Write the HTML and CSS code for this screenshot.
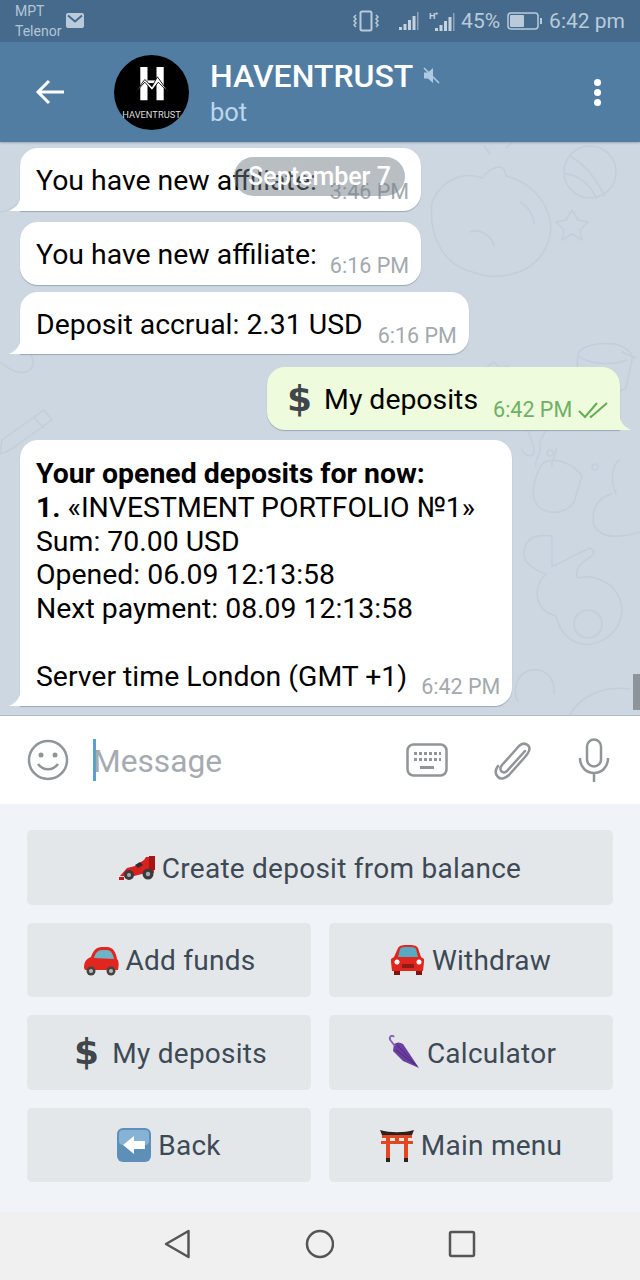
FILE: index.html
```html
<!DOCTYPE html>
<html lang="en">
<head>
<meta charset="utf-8">
<title>HAVENTRUST</title>
<link rel="stylesheet" href="styles.css">
</head>
<body>
<div class="app">
  <div class="status">
    <div class="carrier"><span>MPT</span><span>Telenor</span></div>
    <svg class="mail" viewBox="0 0 18 15"><rect width="18" height="15" rx="2" fill="#b9cbdb"/><path d="M2 2.500l7 6 7-6" fill="none" stroke="#456a8b" stroke-width="2"/></svg>
    <div class="status-right">
      <svg class="st-vib" width="26" height="22" viewBox="0 0 26 22"><rect x="7.500" y="1.500" width="11" height="19" rx="1.500" fill="none" stroke="#b9cbdb" stroke-width="2"/><path d="M3 5l-2 2 2 2-2 2 2 2-2 2 2 2M23 5l2 2-2 2 2 2-2 2 2 2-2 2" fill="none" stroke="#b9cbdb" stroke-width="1.500"/></svg>
      <svg class="st-sig" width="20" height="20" viewBox="0 0 20 20"><path d="M0 16h3v3H0zM4.500 13h3v6h-3zM9 9h3v10H9zM13.500 5h3v14h-3z" fill="#c3d3e0"/><path d="M18 1h1.500v18H18z" fill="#8aa3b8"/></svg>
      <svg class="st-sig2" width="26" height="22" viewBox="0 0 26 22"><text x="0" y="9" class="st-h">H⁺</text><path d="M6 18h3v3H6zM10.500 15h3v6h-3zM15 11h3v10h-3zM19.500 7h3v14h-3z" fill="#c3d3e0"/><path d="M24 3h1.500v18H24z" fill="#8aa3b8"/></svg>
      <span class="st-pct">45%</span>
      <svg class="st-bat" width="36" height="18" viewBox="0 0 36 18"><rect x="1" y="1" width="30" height="16" rx="3" fill="none" stroke="#b9cbdb" stroke-width="1.500"/><rect x="3" y="3" width="14" height="12" rx="1" fill="#b9cbdb"/><rect x="33" y="6" width="2" height="6" fill="#b9cbdb"/></svg>
      <span class="st-time">6:42 pm</span>
    </div>
  </div>

  <header class="bar">
    <svg class="back" width="30" height="26" viewBox="0 0 30 26"><path d="M29 13H3M14 2L3 13l11 11" fill="none" stroke="#fff" stroke-width="3"/></svg>
    <div class="avatar">
      <svg width="36" height="36" viewBox="0 0 40 40"><path d="M7 1h8v37H7zM25 1h8v37h-8z" fill="#fff"/><path d="M15 16h10v3H15z" fill="#fff"/><path d="M1 30L12 15l8 8 6-11 13 18-12-12-7 9-8-9z" fill="#fff" stroke="#000" stroke-width="1"/></svg>
      <span class="avatar-name">HAVENTRUST</span>
    </div>
    <div class="titles">
      <div class="title-row">
        <span class="title">HAVENTRUST</span>
        <svg width="17" height="17" viewBox="0 0 17 17"><path d="M1 5.500h4L10 1v15l-5-4.500H1z" fill="#aecbe4"/><path d="M1 1l15 15" stroke="#aecbe4" stroke-width="1.600" fill="none"/></svg>
      </div>
      <div class="sub">bot</div>
    </div>
    <div class="dots"><i></i><i></i><i></i></div>
  </header>

  <main class="chat">
    <svg class="wall" viewBox="0 0 640 573" fill="none" stroke="#bfcbd7" stroke-width="1.500" stroke-linecap="round" stroke-linejoin="round">
      <circle cx="590" cy="30" r="26"/><path d="M570 14c14 8 28 24 34 40M564 32c14 0 26 10 32 24"/>
      <path d="M432 60c12-26 34-30 50-24 8-10 22-18 24-2 24 6 40 24 44 44 4 24-12 48-38 54-20 6-34 0-46-4-22-8-38-34-34-68z"/><path d="M470 90c10-4 22 4 24 14M520 60c8 4 14 14 14 22M490 12l-6-8M506 6l6-6"/>
      <path d="M566 78l6-10 6 10 10 2-8 8 2 10-10-6-10 6 2-10-8-8z"/>
      <path d="M578 214c0-10 20-14 36-12 10 2 20 8 18 16l-6 28-32 18c-14-4-20-18-16-50z"/><path d="M578 214c10 8 34 10 48 4M622 210l14 6"/>
      <path d="M486 226l8-6 6 6 8-2 0 10 6 6-8 6-2 8-10-4-8 2 2-10-6-8z"/>
      <path d="M510 246c4 14 20 44 24 60 2 10-8 10-12 2M552 232c6 16 2 38-2 54"/>
      <path d="M2 298l42-30 8 10-42 30-10 4z"/><path d="M34 276l10 10"/>
      <path d="M78 344c10-12 26-40 34-46M68 308c16-4 40 12 50 22 4 4-2 8-6 6-16-4-30-12-44-28z"/>
      <path d="M0 220c10 8 22 14 30 8 6-6 2-18-6-24M0 70c8 0 20-8 24-18"/>
      <path d="M552 394c-14-2-26 0-28 16-2 10 10 18 22 22-14 14-12 36 10 42 8 30 32 34 50 22 14-8 22-30 10-46-8-12-26-18-38-14-6-10 8-18 14-22 4-4 0-10-6-6-16 6-24 14-34 16z"/>
      <circle cx="588" cy="482" r="14"/>
      <path d="M542 322c-8 14-14 34-2 44 12 8 28 4 34-6l8-26c-10-14-30-20-40-12z"/>
      <path d="M536 324c-2-6 6-14 4-20-2-6 4-10 6-16M552 324c-2-6 6-12 4-18"/>
      <path d="M612 352c-12 2-22 14-18 32 6 10 20 14 46 6M620 318c-8 4-10 20-4 34"/>
      <circle cx="595" cy="325" r="3"/><circle cx="550" cy="311" r="3"/>
      <path d="M570 573c8-16 30-30 60-26"/>
      <path d="M518 560c-6-12-2-30 14-32 12-2 24 8 22 24"/>
    </svg>

    <div class="bubble in tail"><span class="txt">You have new affiliate:</span><span class="time">3:46 PM</span><svg class="tail-l" width="12" height="16" viewBox="0 0 12 16"><path d="M12 0C11 8 7 13 0 16h12z" fill="#fff"/></svg></div>
    <div class="bubble in second"><span class="txt">You have new affiliate:</span><span class="time">6:16 PM</span></div>
    <div class="bubble in third"><span class="txt">Deposit accrual: 2.31 USD</span><span class="time">6:16 PM</span><svg class="tail-l" width="12" height="16" viewBox="0 0 12 16"><path d="M12 0C11 8 7 13 0 16h12z" fill="#fff"/></svg></div>
    <div class="bubble out"><span class="txt"><b class="dollar">$</b> My deposits</span><span class="time">6:42 PM</span>
      <svg class="ticks" width="32" height="18" viewBox="0 0 32 18"><path d="M2 10l6 6L20 2M13 15l1 1L30 2" fill="none" stroke="#62ac55" stroke-width="2"/></svg>
      <svg class="tail-r" width="12" height="16" viewBox="0 0 12 16"><path d="M0 0C1 8 5 13 12 16H0z" fill="#eefbdc"/></svg>
    </div>
    <div class="bubble in big">
      <div class="txt"><b>Your opened deposits for now:</b><br><b>1.</b> «INVESTMENT PORTFOLIO №1»<br>Sum: 70.00 USD<br>Opened: 06.09 12:13:58<br>Next payment: 08.09 12:13:58<br><br>Server time London (GMT +1)</div>
      <span class="time">6:42 PM</span>
      <svg class="tail-l" width="12" height="16" viewBox="0 0 12 16"><path d="M12 0C11 8 7 13 0 16h12z" fill="#fff"/></svg>
    </div>

    <div class="date">September 7</div>
    <div class="thumb"></div>
  </main>

  <div class="input">
    <svg width="42" height="42" viewBox="0 0 42 42" fill="none" stroke="#909598" stroke-width="2.500"><circle cx="21" cy="21" r="19"/><path d="M11 25c5 7 15 7 20 0"/><circle cx="14" cy="16" r="2.500" fill="#909598" stroke="none"/><circle cx="28" cy="16" r="2.500" fill="#909598" stroke="none"/></svg>
    <div class="field"><i class="caret"></i><span class="ph">Message</span></div>
    <svg class="ic-kb" width="42" height="34" viewBox="0 0 42 34"><rect x="1.500" y="1.500" width="39" height="31" rx="6" fill="none" stroke="#909598" stroke-width="2.500"/><path d="M8 9h3v3H8zM13 9h3v3h-3zM18 9h3v3h-3zM23 9h3v3h-3zM28 9h3v3h-3zM33 9h2v3h-2zM8 15h3v3H8zM13 15h3v3h-3zM18 15h3v3h-3zM23 15h3v3h-3zM28 15h3v3h-3zM33 15h2v3h-2zM14 23h14v3H14z" fill="#909598"/></svg>
    <svg class="ic-clip" width="38" height="42" viewBox="0 0 38 42"><path d="M31 12L13 32c-4 4-9-1-5-6L25 7c5-5 12-1 10 5-1 2-2 4-4 6L15 36c-3 3-8 5-11 2-3-3-3-7 0-11" transform="translate(1 0)" fill="none" stroke="#909598" stroke-width="2.500" stroke-linecap="round"/></svg>
    <svg class="ic-mic" width="32" height="44" viewBox="0 0 32 44" fill="none" stroke="#909598" stroke-width="2.500"><rect x="9" y="1.500" width="14" height="27" rx="7"/><path d="M2 20c0 20 28 20 28 0M16 34v10"/></svg>
  </div>

  <section class="keys">
    <button class="key wide">
      <svg class="emo" width="36" height="28" viewBox="0 0 36 28"><path d="M1 23l7-8 8-2 9-6 2-3h8v16H27l-12 3H3z" fill="#d8201e"/><path d="M30 3h6v14h-6z" fill="#a81414"/><path d="M16 12l5-3 3 3-5 3z" fill="#3a2a2a"/><path d="M0 24h5v3H0z" fill="#c01818"/><circle cx="10" cy="22" r="5" fill="#3b3b3b"/><circle cx="10" cy="22" r="2" fill="#aaa"/><circle cx="29" cy="21" r="5.500" fill="#3b3b3b"/><circle cx="29" cy="21" r="2.200" fill="#aaa"/></svg>
      <span>Create deposit from balance</span>
    </button>
    <button class="key">
      <svg class="emo" width="36" height="32" viewBox="0 0 36 32"><path d="M1 24c0-6 2-9 7-11 2-6 5-10 11-10h5c6 0 9 5 10 12 2 2 2 6 1 11H2z" fill="#e0261f"/><path d="M11 14c1-5 4-8 8-8h5c4 0 6 4 7 9z" fill="#6fb4c6"/><circle cx="8" cy="27" r="4.500" fill="#444"/><circle cx="8" cy="27" r="2" fill="#bbb"/><circle cx="28" cy="27" r="4.500" fill="#444"/><circle cx="28" cy="27" r="2" fill="#bbb"/></svg>
      <span>Add funds</span>
    </button>
    <button class="key">
      <svg class="emo" width="34" height="32" viewBox="0 0 34 32"><path d="M7 4c2-3 5-3 10-3s8 0 10 3l3 9 3 2v3l-1 9H1l-1-9v-3l3-2z" fill="#e0261f"/><path d="M7 13l2-8c1-2 4-2 8-2s7 0 8 2l2 8z" fill="#57aac4"/><path d="M3 27h6v4H3zM25 27h6v4h-6z" fill="#7a1510"/><circle cx="6" cy="18" r="2.500" fill="#fff"/><circle cx="28" cy="18" r="2.500" fill="#fff"/><path d="M11 20h12v4H11z" fill="#8c1c16"/></svg>
      <span>Withdraw</span>
    </button>
    <button class="key key-dollar">
      <b class="dollar">$</b>
      <span>My deposits</span>
    </button>
    <button class="key">
      <svg class="emo" width="34" height="34" viewBox="0 0 34 34"><path d="M8 9c3-2 6-2 9 0l16 24-16-7-10-10z" fill="#6b3fa0"/><path d="M11 10l20 21M10 15l18 14" stroke="#4c2a78" stroke-width="1" fill="none"/><path d="M9 11L5 6C2 2 6-1 8 2" fill="none" stroke="#8a64b8" stroke-width="2"/></svg>
      <span>Calculator</span>
    </button>
    <button class="key">
      <svg class="emo" width="34" height="34" viewBox="0 0 34 34"><rect width="34" height="34" rx="6" fill="#5d8fb9"/><rect x="2" y="2" width="30" height="15" rx="4" fill="#86b2d6"/><path d="M6 17l11-9v5h11v8H17v5z" fill="#fff"/></svg>
      <span>Back</span>
    </button>
    <button class="key">
      <svg class="emo" width="34" height="34" viewBox="0 0 34 34"><path d="M0 2c10 3 24 3 34 0l-2 5H2z" fill="#2b2320"/><path d="M2 7h30v3H2zM1 13h32v3H1zM15 10h4v3h-4z" fill="#e2471f"/><path d="M6 7h4v23H6zM24 7h4v23h-4z" fill="#e2471f"/><path d="M6 30h4v4H6zM24 30h4v4h-4z" fill="#2b2320"/></svg>
      <span>Main menu</span>
    </button>
  </section>

  <nav class="nav">
    <svg width="26" height="30" viewBox="0 0 26 30"><path d="M24.500 2v26L2 15z" fill="none" stroke="#555" stroke-width="2.500" stroke-linejoin="round"/></svg>
    <svg width="30" height="30" viewBox="0 0 30 30"><circle cx="16" cy="15" r="13" fill="none" stroke="#555" stroke-width="2.500"/></svg>
    <svg width="28" height="28" viewBox="0 0 28 28"><rect x="2" y="2" width="24" height="24" rx="1.500" fill="none" stroke="#555" stroke-width="2.500"/></svg>
  </nav>
</div>
</body>
</html>
```
FILE: styles.css
```css
* { box-sizing: border-box; }
html, body { margin: 0; padding: 0; }
body { font-family: Roboto, "Noto Sans", sans-serif; background: #fff; }
.app { width: 640px; height: 1280px; display: flex; flex-direction: column; overflow: hidden; }

/* status bar */
.status { height: 42px; flex: none; background: #456a8b; display: flex; align-items: center; padding: 0 15px; color: #b9cbdb; }
.carrier { display: flex; flex-direction: column; font-size: 14px; line-height: 20px; color: #b4c6d6; }
.mail { width: 18px; height: 15px; position: relative; top: -1px; margin-left: 5px; }
.status-right { margin-left: auto; display: flex; align-items: center; }
.st-vib { margin-right: 20px; }
.st-sig { margin-right: 10px; }
.st-sig2 { margin-right: 6px; }
.st-h { font: 700 9px "Liberation Sans", sans-serif; fill: #c3d3e0; }
.st-pct { font-size: 21px; margin-right: 7px; }
.st-bat { margin-right: 6px; }
.st-time { font-size: 21px; }

/* app bar */
.bar { height: 100px; flex: none; background: #527da3; display: flex; align-items: center; padding-left: 35px; color: #fff; position: relative; z-index: 2; box-shadow: 0 1px 2px rgba(60, 80, 100, .35); }
.avatar { width: 75px; height: 75px; margin-left: 49px; border-radius: 50%; background: #000; display: flex; flex-direction: column; align-items: center; padding-top: 11px; flex: none; }
.avatar svg { display: block; }
.avatar-name { font-size: 9.300px; line-height: 12px; margin-top: 7px; color: #ddd; white-space: nowrap; }
.titles { margin-left: 21px; }
.title-row { display: flex; align-items: center; gap: 10px; }
.title { font-size: 32px; line-height: 38px; font-weight: 500; }
.sub { font-size: 25.500px; line-height: 32px; color: #bcd6ec; margin-top: 1px; }
.dots { margin-left: auto; margin-right: 39px; display: flex; flex-direction: column; gap: 3px; }
.dots i { width: 7px; height: 7px; border-radius: 50%; background: #fff; display: block; }

/* chat */
.chat { flex: 1; min-height: 0; background: #cdd7e1; position: relative; overflow: hidden; padding-top: 6px; display: flex; flex-direction: column; align-items: flex-start; border-bottom: 1px solid #b3bcc4; }
.wall { position: absolute; left: 0; top: 0; width: 640px; height: 573px; opacity: .7; }
.bubble { position: relative; flex: none; display: flex; align-items: flex-end; background: #fff; border-radius: 18px; margin-left: 20px; padding: 15px 12px 14px 16px; box-shadow: 0 1px 1px rgba(90, 110, 130, .45); color: #000; }
.bubble.tail, .bubble.third, .bubble.big { border-bottom-left-radius: 0; }
.second { margin-top: 11px; }
.third { margin-top: 7px; padding-bottom: 13px; }
.txt { font-size: 28.400px; line-height: 34px; white-space: nowrap; position: relative; top: 1px; }
.time { font-size: 21.500px; line-height: 24px; color: #a3a9ae; margin-left: 15px; position: relative; top: 7px; white-space: nowrap; }
.tail .time, .second .time { margin-left: 13px; }
.tail-l { position: absolute; left: -11px; bottom: 0; }
.tail-r { position: absolute; right: -11px; bottom: 0; }
.out { background: #eefbdc; margin-left: 267px; margin-top: 13px; padding-right: 11px; padding-bottom: 14px; height: 63px; border-bottom-right-radius: 0; }
.out .txt { top: 1px; }
.out .time { color: #6fb067; margin-left: 15px; top: 6px; }
.ticks { margin-left: 5px; position: relative; top: 3px; }
.dollar { font: 700 36px/28px "DejaVu Sans", sans-serif; color: #404649; }
.out .dollar { margin: 0 5px 0 4px; vertical-align: -2px; }
.big { margin-top: 10px; padding-bottom: 14px; }
.big .txt { line-height: 33.800px; top: 2px; }
.big .time { margin-left: -54px; }
.date { position: absolute; left: 234px; top: 15px; width: 171px; height: 39px; border-radius: 20px; background: rgba(115, 125, 135, .5); color: #fff; font-size: 25px; font-weight: 500; line-height: 39px; text-align: center; }
.thumb { position: absolute; right: 0; top: 532px; width: 7px; height: 36px; background: #8d949a; }

/* composer */
.input { height: 88px; flex: none; background: #fff; display: flex; align-items: center; padding: 0 30px 0 27px; }
.field { flex: 1; display: flex; align-items: center; margin-left: 24px; }
.caret { width: 3px; height: 42px; background: #5a9fd6; display: block; }
.ph { font-size: 31.700px; color: #a5abb0; margin-left: -3px; position: relative; top: 1px; }
.ic-kb { position: relative; left: 1px; }
.ic-clip { margin-left: 46px; }
.ic-mic { margin-left: 47px; }

/* bot keyboard */
.keys { flex: none; height: 408px; background: #f0f3f7; padding: 26px 27px 30px; display: grid; grid-template-columns: 284px 284px; grid-auto-rows: 74.500px; column-gap: 18px; row-gap: 18px; }
.key { border: 0; margin: 0; background: #e4e7ea; border-radius: 5px; display: flex; align-items: center; justify-content: center; gap: 7px; font: 400 28px Roboto, sans-serif; letter-spacing: .25px; color: #3d4a55; padding: 0; }
.key span { position: relative; top: 1px; }
.key.wide { grid-column: 1 / 3; }
.key .dollar { margin-right: 6px; }
.key-dollar { padding-left: 3px; }
.emo { display: block; flex: none; }

/* system nav */
.nav { height: 68px; flex: none; background: #f0f0f0; display: flex; align-items: center; padding: 0 164px 4px; justify-content: space-between; }
```
